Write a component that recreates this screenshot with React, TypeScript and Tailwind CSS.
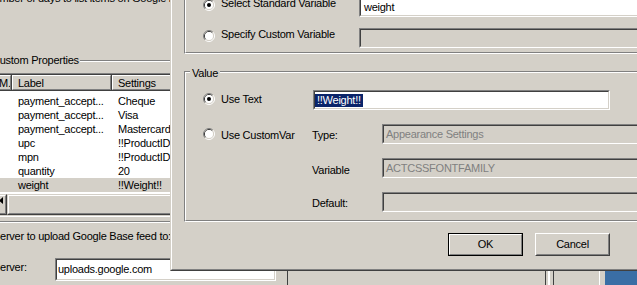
import React from "react";

function Radio({ checked = false }: { checked?: boolean }) {
  return (
    <svg width="12" height="12" viewBox="0 0 12 12" className="block shrink-0">
      <path d="M2.11 9.89A5.5 5.5 0 0 1 9.89 2.11" fill="none" stroke="#808080" strokeWidth="1" />
      <path d="M9.89 2.11A5.5 5.5 0 0 1 2.11 9.89" fill="none" stroke="#ffffff" strokeWidth="1" />
      <path d="M2.82 9.18A4.5 4.5 0 0 1 9.18 2.82" fill="none" stroke="#404040" strokeWidth="1" />
      <path d="M9.18 2.82A4.5 4.5 0 0 1 2.82 9.18" fill="none" stroke="#d4d0c8" strokeWidth="1" />
      <circle cx="6" cy="6" r="4" fill="#ffffff" />
      {checked && <circle cx="6" cy="6" r="2" fill="#000000" />}
    </svg>
  );
}

function Edit({
  className = "",
  innerClass = "",
  children,
}: {
  className?: string;
  innerClass?: string;
  children?: React.ReactNode;
}) {
  return (
    <div className={"shrink-0 border border-t-[#808080] border-l-[#808080] border-b-white border-r-white " + className}>
      <div
        className={
          "h-full flex items-center whitespace-nowrap overflow-hidden border border-t-[#404040] border-l-[#404040] border-b-[#d4d0c8] border-r-[#d4d0c8] " +
          innerClass
        }
      >
        {children}
      </div>
    </div>
  );
}

function HeaderCell({
  outer,
  pad,
  children,
}: {
  outer: string;
  pad: string;
  children: React.ReactNode;
}) {
  return (
    <div className={"border-r border-r-[#404040] " + outer}>
      <div
        className={
          "h-[15px] pt-[1px] leading-[12px] whitespace-nowrap overflow-hidden border border-t-white border-l-white border-r-[#808080] border-b-[#808080] " +
          pad
        }
      >
        {children}
      </div>
    </div>
  );
}

const rows: [string, string][] = [
  ["payment_accept...", "Cheque"],
  ["payment_accept...", "Visa"],
  ["payment_accept...", "Mastercard"],
  ["upc", "!!ProductID!!"],
  ["mpn", "!!ProductID!!"],
  ["quantity", "20"],
  ["weight", "!!Weight!!"],
];

export default function App() {
  return (
    <div className="relative w-[637px] h-[285px] overflow-hidden bg-[#3a6ea5] font-['Liberation_Sans',Arial,sans-serif] text-[11px] leading-[13px] tracking-[-0.25px] text-black">
      {/* Background window */}
      <div className="w-[605px] h-full bg-[#d4d0c8] flex flex-col">
        <div className="mt-[-8px] ml-[-14px] h-[13px] whitespace-nowrap">
          Number of days to list items on Google base:
        </div>

        <div className="mt-[49px] ml-[-8px] h-[13px] flex items-start">
          <span className="whitespace-nowrap">Custom Properties</span>
          <div className="ml-[1px] mt-[6px] h-[2px] flex-1 border-t border-b border-t-[#808080] border-b-white" />
        </div>

        {/* List view */}
        <div className="mt-[6px] ml-[-20px] w-[600px] border-t border-l border-b border-t-[#808080] border-l-[#808080] border-b-white">
          <div className="border-t border-l border-b border-t-[#404040] border-l-[#404040] border-b-[#d4d0c8] bg-white">
            <div className="flex border-b border-b-[#404040] bg-[#d4d0c8]">
              <HeaderCell outer="w-[30px]" pad="pl-[16px]">
                M.
              </HeaderCell>
              <HeaderCell outer="w-[100px]" pad="pl-[5px]">
                Label
              </HeaderCell>
              <HeaderCell outer="flex-1" pad="pl-[5px]">
                Settings
              </HeaderCell>
            </div>
            <div className="pt-[3px] pb-[2px] bg-white">
              {rows.map(([label, setting], i) => (
                <div
                  key={i}
                  className={
                    "flex h-[14px] leading-[14px] whitespace-nowrap " +
                    (i === rows.length - 1 ? "bg-[#d4d0c8]" : "bg-white")
                  }
                >
                  <div className="w-[30px]" />
                  <div className="w-[100px] pl-[6px] overflow-hidden">{label}</div>
                  <div className="flex-1 pl-[6px]">{setting}</div>
                </div>
              ))}
            </div>
            {/* horizontal scrollbar */}
            <div className="flex h-[21px] bg-[#d4d0c8]">
              <div className="w-[25px] border-t border-r border-b border-t-[#d4d0c8] border-r-[#404040] border-b-[#404040]">
                <div className="h-full flex items-start justify-end pt-[1px] pr-[2px] border-t border-r border-b border-t-white border-r-[#808080] border-b-[#808080]">
                  <svg width="4" height="7" viewBox="0 0 4 7" className="block">
                    <polygon points="0,3.5 4,0 4,7" fill="#000000" />
                  </svg>
                </div>
              </div>
              <div className="flex-1 border border-t-[#d4d0c8] border-l-[#d4d0c8] border-b-[#404040] border-r-[#404040]">
                <div className="h-full border border-t-white border-l-white border-b-[#808080] border-r-[#808080]" />
              </div>
            </div>
          </div>
        </div>

        <div className="mt-[4px] h-[2px] border-t border-b border-t-[#808080] border-b-white" />

        <div className="mt-[7px] ml-[-7px] h-[13px] whitespace-nowrap">
          Server to upload Google Base feed to:
        </div>

        <div className="mt-[15px] flex items-start h-[30px]">
          <div className="w-[62px] ml-[-7px] mt-[3px] whitespace-nowrap">Server:</div>
          <Edit className="w-[221px] h-[23px]" innerClass="bg-white pl-[1px]">
            uploads.google.com
          </Edit>
          <div className="ml-[11px] w-[1px] h-[30px] bg-[#404040]" />
          <div className="ml-[257px] w-[1px] h-[30px] bg-[#404040]" />
          <div className="ml-[2px] w-[2px] h-[30px] bg-white" />
          <div className="ml-[3px] w-[1px] h-[30px] bg-[#404040]" />
          <div className="ml-[45px] w-[1px] h-[30px] bg-white" />
        </div>
      </div>

      {/* Dialog */}
      <div className="absolute left-[170px] top-0 w-[500px] h-[271px] border-l border-b border-l-[#d4d0c8] border-b-[#404040]">
        <div className="h-full flex flex-col bg-[#d4d0c8] border-l border-b border-l-white border-b-[#808080]">
          {/* Variable group */}
          <div className="ml-[12px] mt-[-3px] border-l border-b border-l-[#808080] border-b-white">
            <div className="pb-[4px] flex flex-col gap-[11px] border-l border-b border-l-white border-b-[#808080]">
              <div className="flex items-start h-[20px]">
                <div className="ml-[17px] mt-[2px]">
                  <Radio checked />
                </div>
                <div className="ml-[6px] w-[138px] whitespace-nowrap">Select Standard Variable</div>
                <Edit className="w-[300px] h-[20px]" innerClass="bg-white pl-[3px]">
                  weight
                </Edit>
              </div>
              <div className="flex items-start h-[20px]">
                <div className="ml-[17px] mt-[2px]">
                  <Radio />
                </div>
                <div className="ml-[6px] w-[138px] whitespace-nowrap">Specify Custom Variable</div>
                <Edit className="w-[300px] h-[20px]" innerClass="bg-[#d4d0c8]" />
              </div>
            </div>
          </div>

          {/* Value group */}
          <div className="relative ml-[12px] mt-[17px] border-t border-l border-b border-t-[#808080] border-l-[#808080] border-b-white">
            <div className="absolute left-[5px] top-[-5px] px-[2px] bg-[#d4d0c8] whitespace-nowrap">Value</div>
            <div className="pt-[17px] pb-[8px] border-t border-l border-b border-t-white border-l-white border-b-[#808080]">
              <div className="flex items-start h-[20px]">
                <div className="ml-[17px] mt-[3px]">
                  <Radio checked />
                </div>
                <div className="ml-[6px] mt-[3px] w-[92px] whitespace-nowrap">Use Text</div>
                <Edit className="w-[297px] h-[20px]" innerClass="bg-white">
                  <span className="bg-[#0a246a] text-white px-[2px]">!!Weight!!</span>
                </Edit>
              </div>

              <div className="mt-[14px] grid grid-cols-[126px_70px_300px] gap-y-[14px]">
                <div className="flex items-start h-[20px]">
                  <div className="ml-[17px] mt-[4px]">
                    <Radio />
                  </div>
                  <div className="ml-[6px] mt-[5px] whitespace-nowrap">Use CustomVar</div>
                </div>
                <div className="mt-[5px] whitespace-nowrap">Type:</div>
                <Edit className="w-[300px] h-[20px]" innerClass="bg-[#d4d0c8] text-[#808080] pl-[2px]">
                  Appearance Settings
                </Edit>

                <div />
                <div className="mt-[6px] whitespace-nowrap">Variable</div>
                <Edit className="w-[300px] h-[20px]" innerClass="bg-[#d4d0c8] text-[#808080] pl-[2px]">
                  ACTCSSFONTFAMILY
                </Edit>

                <div />
                <div className="mt-[5px] whitespace-nowrap">Default:</div>
                <Edit className="w-[300px] h-[20px]" innerClass="bg-[#d4d0c8] text-[#808080] pl-[2px]" />
              </div>
            </div>
          </div>

          {/* Buttons */}
          <div className="mt-[11px] ml-[276px] flex gap-[12px]">
            <div className="w-[75px] h-[23px] border border-black">
              <div className="h-full flex items-center justify-center border border-t-white border-l-white border-b-[#808080] border-r-[#808080]">
                OK
              </div>
            </div>
            <div className="w-[75px] h-[23px] border border-t-white border-l-white border-b-[#404040] border-r-[#404040]">
              <div className="h-full flex items-center justify-center border border-t-[#d4d0c8] border-l-[#d4d0c8] border-b-[#808080] border-r-[#808080]">
                Cancel
              </div>
            </div>
          </div>
        </div>
      </div>
    </div>
  );
}
